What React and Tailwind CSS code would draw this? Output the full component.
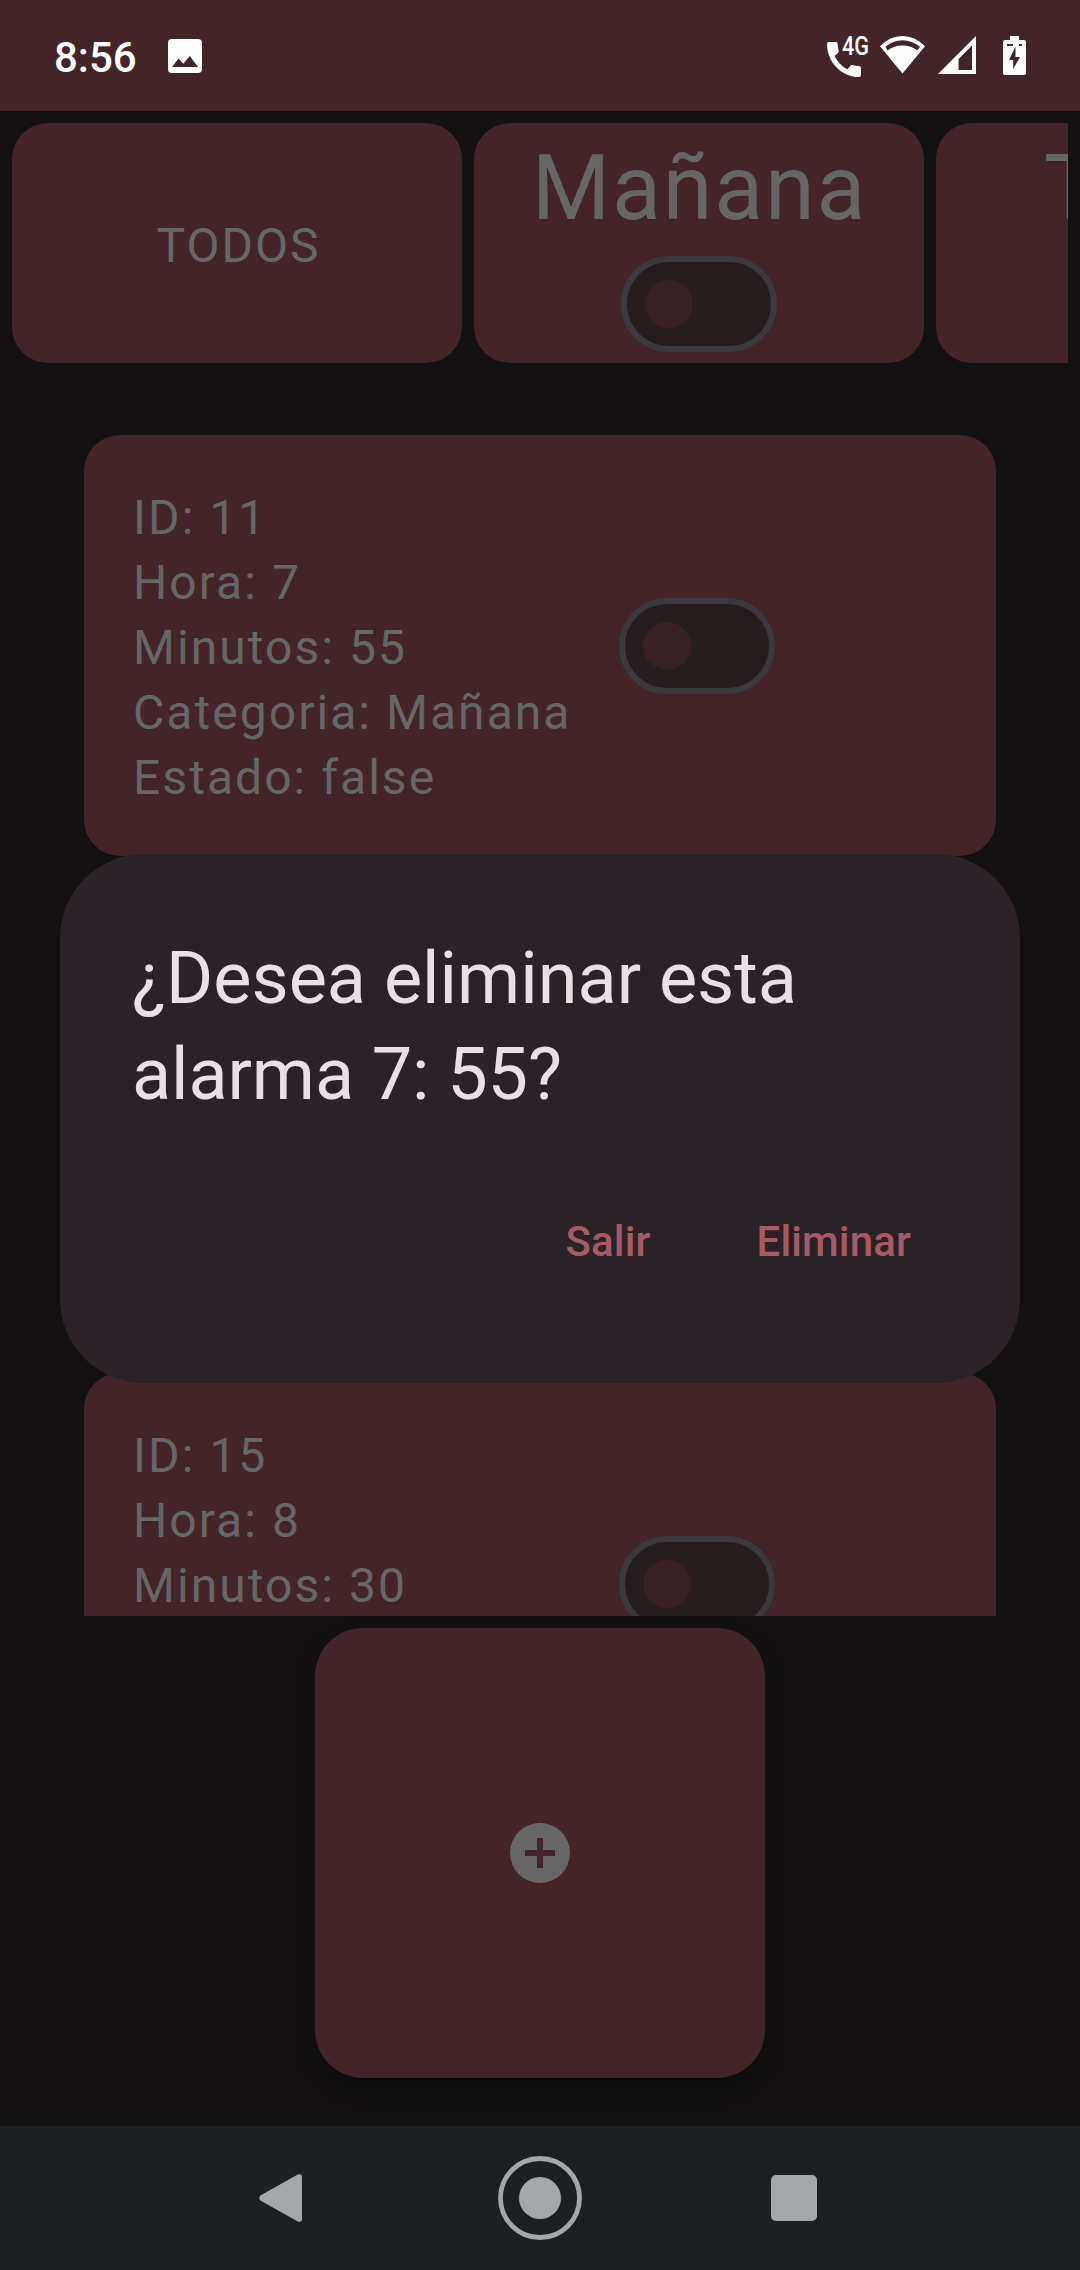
import React from "react";

const firstAlarm = ["ID: 11", "Hora: 7", "Minutos: 55", "Categoria: Mañana", "Estado: false"];
const lastAlarm = ["ID: 15", "Hora: 8", "Minutos: 30"];

function Switch() {
  return (
    <div className="flex h-24 w-[156px] shrink-0 items-center rounded-full border-[6px] border-[#3b393d] bg-[#261d1e] pl-[18px]">
      <div className="size-12 rounded-full bg-[#372124]" />
    </div>
  );
}

function StatusBar() {
  return (
    <header className="flex h-[111px] shrink-0 items-start justify-between bg-[#422429] pl-[54px] pr-[54px] text-white">
      <div className="flex items-start">
        <span className="mt-[33px] w-[84px] text-[42px] leading-[50px] font-medium">8:56</span>
        <svg className="mt-[39px] ml-[30px] h-[34px] w-[34px]" viewBox="0 0 34 34" fill="currentColor" fillRule="evenodd">
          <path d="M4 0H30Q34 0 34 4V30Q34 34 30 34H4Q0 34 0 30V4Q0 0 4 0ZM4 28H30L21.8 17L15.3 24.8L10.6 19.5Z" />
        </svg>
      </div>
      <div className="flex items-start pt-[35px]">
        <div className="relative h-[44px] w-[42px]">
          <svg className="absolute top-[7px] left-0 h-[35px] w-[34px]" viewBox="3 3 18 18" preserveAspectRatio="none" fill="currentColor">
            <path d="M20.01 15.38c-1.23 0-2.42-.2-3.53-.56-.35-.12-.74-.03-1.01.24l-1.57 1.97c-2.83-1.35-5.48-3.9-6.89-6.83l1.95-1.66c.27-.28.35-.67.24-1.02-.37-1.11-.56-2.3-.56-3.53 0-.54-.45-.99-.99-.99H4.19C3.65 3 3 3.24 3 3.99 3 13.28 10.73 21 20.01 21c.71 0 .99-.63.99-1.18v-3.45c0-.54-.45-.99-.99-.99z" />
          </svg>
          <span className="absolute -top-px left-[15px] origin-left scale-x-[0.83] text-[26px] leading-[24px] font-medium">4G</span>
        </div>
        <svg className="ml-[11px] h-[39px] w-[45px]" viewBox="0 0 45 39" fill="currentColor" fillRule="evenodd">
          <path d="M0 11.3Q10 1 22.5 1Q35 1 45 11.3L22.5 38.5ZM5.4 11.8L7.6 15.5Q14 10.5 22.5 10.5Q31 10.5 37.4 15.5L40 11.8Q32 5.2 22.5 5.2Q13 5.2 5.4 11.8Z" />
        </svg>
        <svg className="ml-[13px] h-[40px] w-[38px]" viewBox="0 0 38 40" fill="currentColor" fillRule="evenodd">
          <path d="M38 1V39H0ZM34 10.5L20.5 24V35H34Z" />
        </svg>
        <svg className="ml-[27px] h-[41px] w-[23px]" viewBox="0 0 23 41" fill="currentColor" fillRule="evenodd">
          <path d="M7 1H16V5H21Q23 5 23 7V38Q23 40 21 40H2Q0 40 0 38V7Q0 5 2 5H7ZM4 9V11H10V9ZM16 9V11H19V9ZM12.5 11.5L6 25H10.2V34L17 22H12.5Z" />
        </svg>
      </div>
    </header>
  );
}

function CategoryCard({ name }) {
  return (
    <div className="flex h-60 w-[450px] shrink-0 flex-col items-center rounded-[36px] bg-[#422429] pt-[12px]">
      <span className="pl-px text-[90px] leading-[108px] tracking-[1.8px]">{name}</span>
      <div className="mt-[13px]">
        <Switch />
      </div>
    </div>
  );
}

function AlarmCard({ lines }) {
  return (
    <article className="flex h-[421px] shrink-0 items-center rounded-[36px] bg-[#422429] pl-[49px]">
      <div className="w-[486px] self-start pt-[50px] text-[48px] leading-[65px] tracking-[2.05px] whitespace-nowrap">
        {lines.map((line) => (
          <p key={line}>{line}</p>
        ))}
      </div>
      <Switch />
    </article>
  );
}

function DeleteDialog() {
  return (
    <div className="absolute inset-x-0 top-[854px] flex justify-center">
      <section className="flex h-[529px] w-[960px] flex-col rounded-[84px] bg-[#2b2227] px-[72px] pt-[77px]">
        <h1 className="text-[72px] leading-[96px] font-normal text-[#e6e1e5]">
          ¿Desea eliminar esta
          <br />
          <span className="tracking-[-0.1px]">alarma 7: 55?</span>
        </h1>
        <div className="mt-[95px] flex justify-end gap-[106px] pr-[37px] text-[42px] leading-[48px] font-medium tracking-[0.15px] text-[#a65a66]">
          <button>Salir</button>
          <button>Eliminar</button>
        </div>
      </section>
    </div>
  );
}

function NavBar() {
  return (
    <nav className="flex h-36 shrink-0 items-center bg-[#1c2021] pl-[259px] text-[#a5a6a8]">
      <svg className="h-12 w-[43px]" viewBox="0 0 43 48" fill="currentColor">
        <path d="M1.3 21.6L38.8 .6Q43 -.8 43 3.2V44.8Q43 48.8 38.8 47.4L1.3 26.4Q-.8 24 1.3 21.6Z" />
      </svg>
      <svg className="ml-[196px] size-[84px]" viewBox="0 0 84 84">
        <circle cx="42" cy="42" r="39.5" fill="none" stroke="currentColor" strokeWidth="4.8" />
        <circle cx="42" cy="42" r="21" fill="currentColor" />
      </svg>
      <div className="ml-[189px] size-[46px] rounded-[5px] bg-[#a5a6a8]" />
    </nav>
  );
}

export default function App() {
  return (
    <div className="relative flex h-[2270px] w-[1080px] flex-col overflow-hidden bg-[#131112] font-['Roboto',sans-serif] text-[#666666]">
      <StatusBar />
      <div className="mx-3 mt-3 flex shrink-0 gap-3 overflow-hidden">
        <div className="flex h-60 w-[450px] shrink-0 items-center justify-center rounded-[36px] bg-[#422429] pt-[5px] pl-[3px]">
          <span className="text-[48px] leading-[60px] tracking-[1.95px]">TODOS</span>
        </div>
        <CategoryCard name="Mañana" />
        <CategoryCard name="Tarde" />
      </div>
      <main className="mx-[84px] mt-[72px] flex h-[1181px] shrink-0 flex-col gap-[517px] overflow-hidden">
        <AlarmCard lines={firstAlarm} />
        <AlarmCard lines={lastAlarm} />
      </main>
      <div className="flex h-[510px] shrink-0 justify-center pt-3">
        <button className="flex size-[450px] items-center justify-center rounded-[48px] bg-[#422429] shadow-[0_10px_24px_rgba(0,0,0,0.25)]">
          <svg className="size-[60px]" viewBox="0 0 60 60" fill="currentColor" fillRule="evenodd">
            <path d="M30 0A30 30 0 1 1 30 60A30 30 0 1 1 30 0ZM27 15V27H15V33H27V45H33V33H45V27H33V15Z" />
          </svg>
        </button>
      </div>
      <NavBar />
      <DeleteDialog />
    </div>
  );
}
